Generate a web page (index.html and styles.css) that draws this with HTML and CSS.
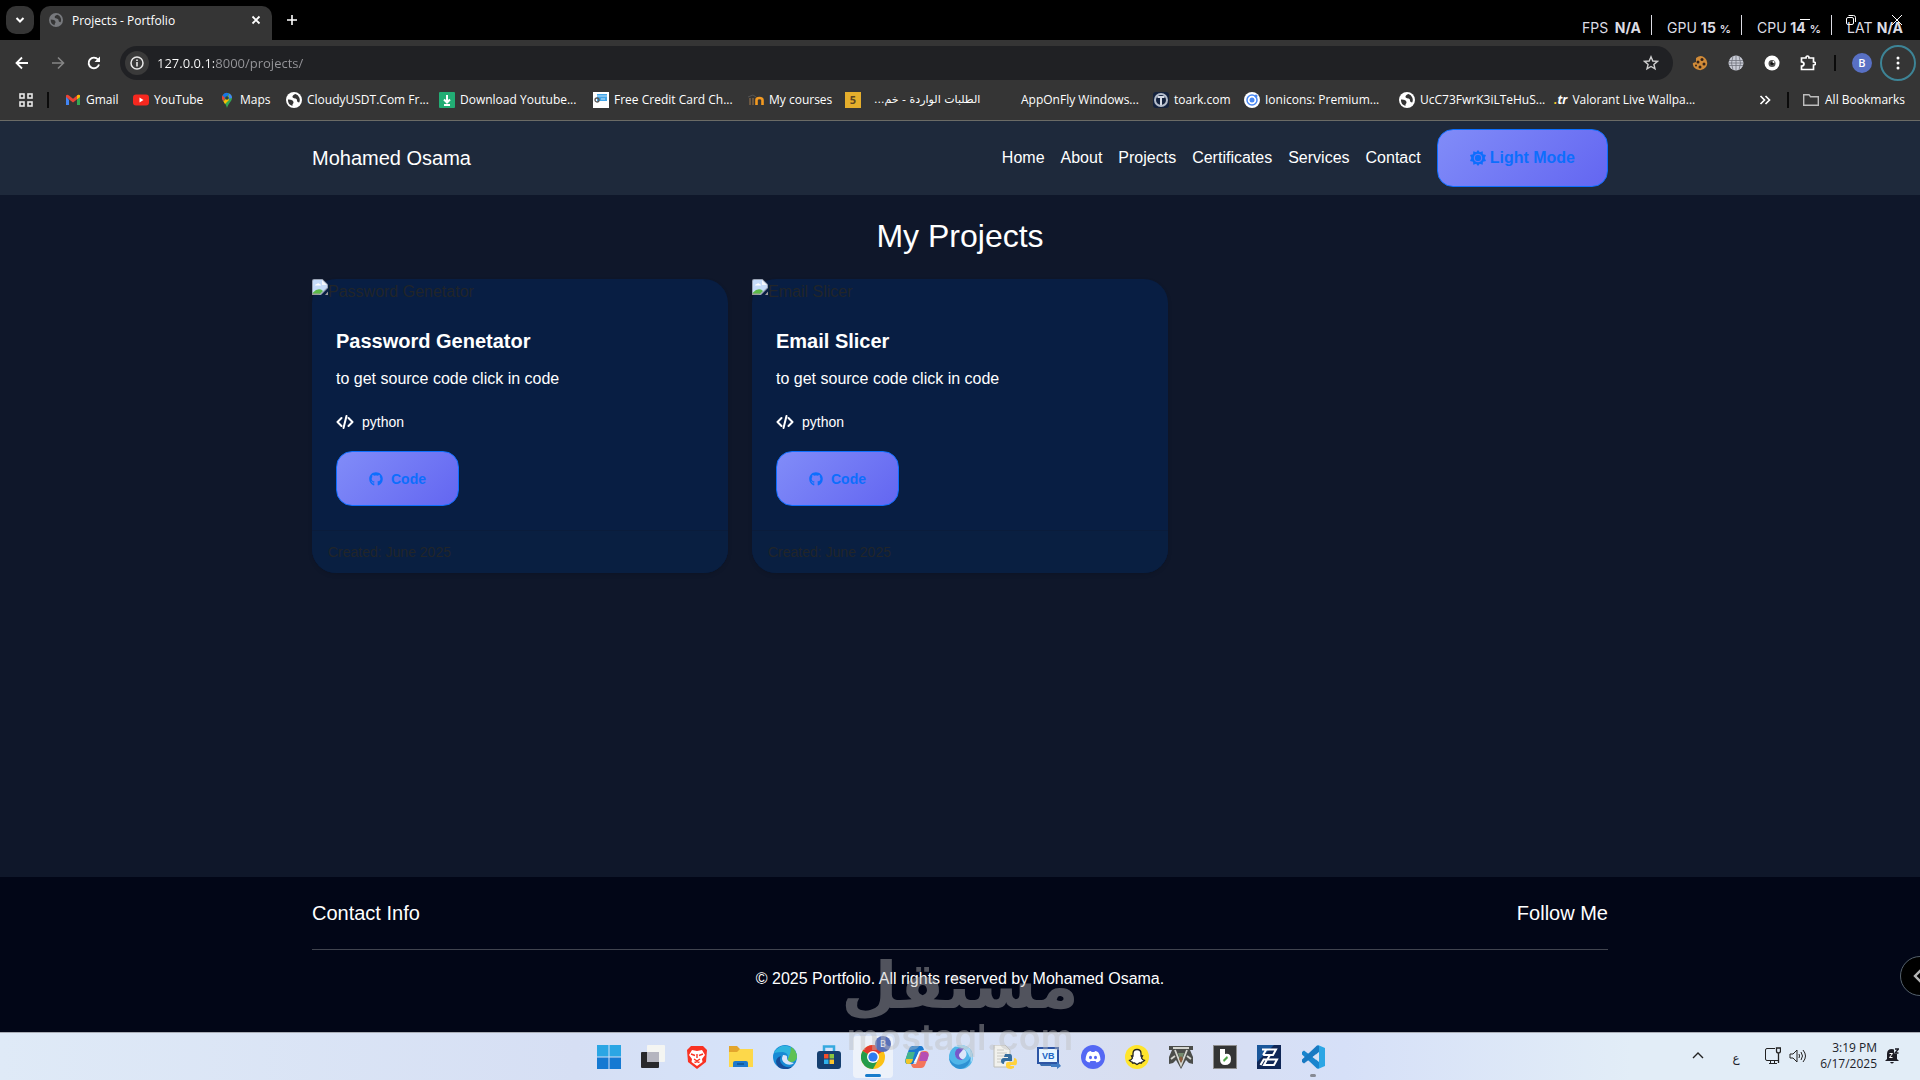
FILE: index.html
```html
<!DOCTYPE html>
<html lang="en">
<head>
<meta charset="utf-8">
<title>Projects - Portfolio</title>
<link rel="stylesheet" href="styles.css">
</head>
<body>
<svg class="defs" aria-hidden="true">
  <symbol id="globe" viewBox="0 0 16 16"><circle cx="8" cy="8" r="8" fill="currentColor"/><path d="M2 7.500c3 0 5.500.8 5.500 3 0 1.200-1.500 1.500-1 3.500A6.200 6.200 0 0 1 2 7.500ZM9.500 2C6.500 3 5.500 5 7.500 6c2 .8 3.500.3 3.500 2.500 0 1.200 1 2 2.200 2A6.200 6.200 0 0 0 9.500 2Z" fill="var(--hole)"/></symbol>
  <symbol id="broken" viewBox="0 0 16 16"><path d="M0 2Q0 0 2 0H10.500L16 5.500V9L9 16H2Q0 16 0 14Z" fill="#9aa4b5"/><path d="M1 2Q1 1 2 1H10L15 6V8.500L8 15H1Z" fill="#c5dcfa"/><path d="M10 1V6H15Z" fill="#f4f8fd"/><path d="M3 6.500Q3 5 5 5 6 3.500 7.500 5 9 5 9 6.500Z" fill="#fff"/><path d="M1 15V13.500Q5 9 9 10.500L11 12 8 15Z" fill="#5bb947"/><path d="M0 14.500H8L6.500 16H0ZM13 16l3-3.500V16Z" fill="#9b9b9b"/></symbol>
  <symbol id="code" viewBox="0 0 18 14"><path d="M5.500 3 1.500 7l4 4M12.500 3l4 4-4 4M10.500 1 7.500 13" fill="none" stroke="currentColor" stroke-width="2" stroke-linecap="round" stroke-linejoin="round"/></symbol>
  <symbol id="github" viewBox="0 0 496 512"><path fill="currentColor" d="M244.800 8C106.100 8 0 113.300 0 252c0 110.900 69.800 205.800 169.500 239.200 12.800 2.300 17.300-5.600 17.300-12.100 0-6.200-.3-40.400-.3-61.400 0 0-70 15-84.700-29.800 0 0-11.400-29.100-27.800-36.600 0 0-22.900-15.700 1.600-15.400 0 0 24.900 2 38.600 25.800 21.900 38.600 58.600 27.500 72.900 20.900 2.300-16 8.800-27.100 16-33.700-55.900-6.200-112.300-14.300-112.300-110.500 0-27.500 7.600-41.300 23.600-58.900-2.600-6.500-11.100-33.300 2.600-67.900 20.900-6.500 69 27 69 27 20-5.600 41.500-8.500 62.800-8.500s42.800 2.900 62.800 8.500c0 0 48.100-33.600 69-27 13.700 34.700 5.200 61.400 2.600 67.900 16 17.700 25.800 31.500 25.800 58.900 0 96.500-58.900 104.200-114.800 110.500 9.200 7.900 17 22.900 17 46.400 0 33.700-.3 75.400-.3 83.600 0 6.500 4.600 14.400 17.300 12.100C428.200 457.800 496 362.900 496 252 496 113.300 383.500 8 244.800 8z"/></symbol>
</svg>

<header class="chrome">
  <div class="tabstrip">
    <button class="tab-search" aria-label="Search tabs"><svg width="10" height="8" viewBox="0 0 10 8"><path d="M1.500 2 5 5.500 8.500 2" fill="none" stroke="#fff" stroke-width="2"/></svg></button>
    <div class="tab">
      <svg class="tab-icon" width="14" height="14"><use href="#globe"/></svg>
      <span class="tab-title">Projects - Portfolio</span>
      <button class="plain" aria-label="Close tab"><svg width="10" height="10" viewBox="0 0 10 10"><path d="M1.500 1.500l7 7M8.500 1.500l-7 7" stroke="#fff" stroke-width="1.800"/></svg></button>
    </div>
    <button class="plain new-tab" aria-label="New tab"><svg width="12" height="12" viewBox="0 0 12 12"><path d="M6 1v10M1 6h10" stroke="#fff" stroke-width="1.600"/></svg></button>
    <div class="hud">
      <div class="stat"><span>FPS</span><b>N/A</b></div>
      <div class="stat"><span>GPU</span><b>15<small>%</small></b></div>
      <div class="stat"><span>CPU</span><b>14<small>%</small></b></div>
      <div class="stat"><span>LAT</span><b>N/A</b></div>
    </div>
    <div class="window-buttons">
      <button class="plain" aria-label="Minimize"><svg width="10" height="10"><path d="M0 4.500h10" stroke="#fff"/></svg></button>
      <button class="plain" aria-label="Restore"><svg width="10" height="10" viewBox="0 0 10 10"><rect x=".5" y="2.500" width="7" height="7" rx="1.500" fill="none" stroke="#fff"/><path d="M2.500.5H7.500Q9.500.5 9.500 2.500V7" fill="none" stroke="#fff"/></svg></button>
      <button class="plain" aria-label="Close"><svg width="10" height="10"><path d="M0 0l10 10M10 0 0 10" stroke="#fff"/></svg></button>
    </div>
  </div>

  <div class="toolbar">
    <div class="nav-buttons">
      <button class="plain" aria-label="Back"><svg width="16" height="16" viewBox="0 0 16 16"><path d="M14 8H3M8 2.500 2.500 8 8 13.500" fill="none" stroke="#fff" stroke-width="1.800"/></svg></button>
      <button class="plain" aria-label="Forward"><svg width="16" height="16" viewBox="0 0 16 16"><path d="M2 8h11M8 2.500 13.500 8 8 13.500" fill="none" stroke="#858585" stroke-width="1.600"/></svg></button>
      <button class="plain" aria-label="Reload"><svg width="16" height="16" viewBox="0 0 16 16"><path d="M13 9.500A5.300 5.300 0 1 1 12 4.500L13.500 6" fill="none" stroke="#fff" stroke-width="1.900"/><path d="M14 1.500V7H8.500Z" fill="#fff"/></svg></button>
    </div>
    <div class="omnibox">
      <button class="site-info" aria-label="Site information"><svg width="14" height="14" viewBox="0 0 14 14"><circle cx="7" cy="7" r="6" fill="none" stroke="#e8e8e8" stroke-width="1.500"/><path d="M7 6v4.500M7 3.500V5" stroke="#e8e8e8" stroke-width="1.600"/></svg></button>
      <input class="url" type="text" aria-label="Address" value="127.0.0.1:8000/projects/">
      <button class="plain" aria-label="Bookmark this page"><svg width="16" height="16" viewBox="0 0 16 16"><path d="M8 1.800 9.800 6l4.600.4-3.500 3 1.100 4.500L8 11.500 4 13.900l1.100-4.500-3.500-3L6.200 6Z" fill="none" stroke="#cfcfcf" stroke-width="1.400"/></svg></button>
    </div>
    <div class="extensions">
      <svg width="16" height="16" viewBox="0 0 16 16"><path d="M4 3Q9-1 13 3 17 7 14 12 10 17 4 14 0 11 1 8L4 7Z" fill="#d18b38"/><g fill="#33231a"><circle cx="6" cy="7" r="1.500"/><circle cx="10" cy="4.500" r="1.500"/><circle cx="12" cy="9" r="1.500"/><circle cx="8" cy="12" r="1.500"/><circle cx="4" cy="10.500" r="1"/></g></svg>
      <svg width="16" height="16" viewBox="0 0 16 16"><circle cx="8" cy="8" r="7.500" fill="#c9ccd6"/><path d="M1 5.500h14M1 10.500h14M8 0v16M1 8h14M5 1Q2 8 5 15M11 1Q14 8 11 15" fill="none" stroke="#71747d" stroke-width=".8"/></svg>
      <svg width="16" height="16" viewBox="0 0 16 16"><circle cx="8" cy="8" r="7.500" fill="#fff"/><circle cx="8" cy="8.500" r="3.500" fill="#555"/><circle cx="8" cy="8.500" r="1.600" fill="#111"/><circle cx="9.500" cy="7" r="1" fill="#fff"/></svg>
      <svg width="16" height="16" viewBox="0 0 16 16"><path d="M1.500 3H6Q6 1 7.500 1T9 3h4.500v4q2 0 2 1.500t-2 1.500v4.500h-12V11q2.500 0 2.500-2T1.500 6.800Z" fill="none" stroke="#fff" stroke-width="1.700"/></svg>
    </div>
    <span class="divider toolbar-divider"></span>
    <button class="avatar" aria-label="Profile">B</button>
    <button class="menu" aria-label="Menu"><svg width="4" height="14" fill="#fff"><circle cx="2" cy="2" r="1.500"/><circle cx="2" cy="7" r="1.500"/><circle cx="2" cy="12" r="1.500"/></svg></button>
  </div>

  <nav class="bookmarks" aria-label="Bookmarks">
    <button class="plain apps" aria-label="Apps"><svg width="14" height="14" viewBox="0 0 14 14"><g fill="none" stroke="#e6e6e6" stroke-width="1.600"><rect x="1" y="1" width="4" height="4"/><rect x="9" y="1" width="4" height="4"/><rect x="1" y="9" width="4" height="4"/><rect x="9" y="9" width="4" height="4"/></g></svg></button>
    <span class="divider"></span>
    <div class="marks">
      <a href="#"><svg viewBox="0 0 16 16"><path d="M1 4v9h3V8Z" fill="#4285f4"/><path d="M15 4v9h-3V8Z" fill="#34a853"/><path d="M1 5V3.500Q2 2 4 3.500L8 6.800 12 3.500Q14 2 15 3.500V5L8 10.500Z" fill="#ea4335"/><path d="M12 3.500Q14 2 15 3.500V5L12 7.500Z" fill="#fbbc04"/></svg>Gmail</a>
      <a href="#"><svg viewBox="0 0 16 16"><rect y="2.500" width="16" height="11" rx="3" fill="#f6281f"/><path d="M6.500 5.500v5L10.500 8Z" fill="#fff"/></svg>YouTube</a>
      <a href="#"><svg viewBox="0 0 16 16"><path d="M3 6a5 5 0 0 1 10 0C13 9 9.500 11 8 16 7 11 3 9 3 6Z" fill="#34a853"/><path d="M3.500 3.500A5 5 0 0 1 10 1.400L6 6.500Z" fill="#1a73e8"/><path d="M10 1.400A5 5 0 0 1 13 6L9 7Z" fill="#4285f4"/><path d="M3.500 3.500 6 6 4.500 9.500Q2 6.500 3.500 3.500Z" fill="#ea4335"/><path d="M4.500 9.500 9.500 4 10 8 6 12Z" fill="#fbbc04"/><circle cx="8" cy="6" r="1.800" fill="#244"/></svg>Maps</a>
      <a href="#"><svg><use href="#globe"/></svg>CloudyUSDT.Com Fr...</a>
      <a href="#"><svg viewBox="0 0 16 16"><rect width="16" height="16" rx="1" fill="#22ad74"/><path d="M8 3v7M5 7.500 8 10.500l3-3M5 13h6" fill="none" stroke="#fff" stroke-width="2"/></svg>Download Youtube...</a>
      <a href="#"><svg viewBox="0 0 16 16"><rect width="16" height="16" fill="#fff"/><rect x="4" y="2" width="10" height="7" fill="#43a5e8"/><path d="M4 4h10M8 7h4" stroke="#bfe2fa"/><circle cx="4" cy="8" r="2" fill="none" stroke="#555" stroke-width="1.300"/></svg>Free Credit Card Ch...</a>
      <a href="#"><svg viewBox="0 0 16 16"><path d="M2 13V6M5 13V6" stroke="#6b5741" stroke-width="2"/><path d="M0 5 5 3l3 2" stroke="#555" fill="none"/><path d="M8.500 13V8q0-2 3-2t3 2v5" fill="none" stroke="#f39a21" stroke-width="2.600"/></svg>My courses</a>
      <a href="#"><span class="five">5</span><span class="arabic" dir="rtl" lang="ar">الطلبات الواردة - خم...</span></a>
      <a href="#" class="no-icon">AppOnFly Windows...</a>
      <a href="#"><svg viewBox="0 0 16 16"><rect width="16" height="16" rx="3" fill="#15233e"/><circle cx="8" cy="8" r="6" fill="none" stroke="#b5bdcb" stroke-width="2"/><path d="M4.500 5h7M8 5v8" stroke="#d5dae5" stroke-width="2"/></svg>toark.com</a>
      <a href="#"><svg viewBox="0 0 16 16"><circle cx="8" cy="8" r="8" fill="#fff"/><circle cx="8" cy="8" r="5" fill="none" stroke="#4887f2" stroke-width="1.500"/><circle cx="8" cy="8" r="2.500" fill="#4887f2"/><circle cx="12" cy="4" r="1.500" fill="#4887f2"/></svg>Ionicons: Premium...</a>
      <a href="#"><svg><use href="#globe"/></svg>UcC73FwrK3iLTeHuS...</a>
      <a href="#"><span class="tr"><i>.</i>tr</span>Valorant Live Wallpa...</a>
    </div>
    <button class="plain more" aria-label="More bookmarks"><svg width="12" height="10" viewBox="0 0 12 10"><path d="M1.500 1 5.500 5l-4 4M6.500 1l4 4-4 4" fill="none" stroke="#fff" stroke-width="1.700"/></svg></button>
    <span class="divider"></span>
    <a class="all" href="#"><svg viewBox="0 0 16 16"><path d="M.7 13.300V2.700H6L7.500 4.700h7.800v8.600Z" fill="none" stroke="#bdbdbd" stroke-width="1.400"/></svg>All Bookmarks</a>
  </nav>
</header>

<div class="page">
  <nav class="site-nav">
    <div class="container nav-row">
      <a class="brand" href="#">Mohamed Osama</a>
      <div class="links">
        <a href="#">Home</a><a href="#">About</a><a href="#">Projects</a><a href="#">Certificates</a><a href="#">Services</a><a href="#">Contact</a>
      </div>
      <button class="btn theme"><svg width="16" height="16" viewBox="0 0 16 16"><path d="M8 0l1.800 2.300L12.700 1.300l.2 3L16 5l-1.300 3L16 11l-3.100.7-.2 3-2.900-1L8 16l-1.800-2.300-2.900 1-.2-3L0 11l1.300-3L0 5l3.100-.7.2-3 2.900 1Z" fill="currentColor"/><circle cx="8" cy="8" r="3.800" fill="none" stroke="#777bf6" stroke-width="1"/></svg>Light Mode</button>
    </div>
  </nav>

  <main class="container">
    <h1>My Projects</h1>
    <div class="cards">
      <article class="card">
        <div class="card-image"><svg width="16" height="16"><use href="#broken"/></svg><span>Password Genetator</span></div>
        <div class="card-body">
          <h2>Password Genetator</h2>
          <p>to get source code click in code</p>
          <div class="lang"><svg width="18" height="14"><use href="#code"/></svg>python</div>
          <button class="btn source"><svg width="14" height="14"><use href="#github"/></svg>Code</button>
        </div>
        <div class="card-footer">Created: June 2025</div>
      </article>
      <article class="card">
        <div class="card-image"><svg width="16" height="16"><use href="#broken"/></svg><span>Email Slicer</span></div>
        <div class="card-body">
          <h2>Email Slicer</h2>
          <p>to get source code click in code</p>
          <div class="lang"><svg width="18" height="14"><use href="#code"/></svg>python</div>
          <button class="btn source"><svg width="14" height="14"><use href="#github"/></svg>Code</button>
        </div>
        <div class="card-footer">Created: June 2025</div>
      </article>
    </div>
  </main>

  <footer class="site-footer">
    <div class="container">
      <div class="footer-row"><h2>Contact Info</h2><h2>Follow Me</h2></div>
      <hr>
      <p>© 2025 Portfolio. All rights reserved by Mohamed Osama.</p>
    </div>
  </footer>
  <button class="side-tab" aria-label="Open panel"><svg width="10" height="16" viewBox="0 0 10 16"><path d="M8.500 1.500 2 8l6.500 6.500" fill="none" stroke="#b5b5b5" stroke-width="2.400"/></svg></button>
</div>

<footer class="taskbar">
  <div class="dock">
    <button aria-label="Start"><svg viewBox="0 0 24 24"><path d="M0 0h11.500v11.500H0ZM12.500 0H24v11.500H12.500Z" fill="#2ba6e4"/><path d="M0 12.500h11.500V24H0ZM12.500 12.500H24V24H12.500Z" fill="#1579d2"/></svg></button>
    <button aria-label="Task view"><svg viewBox="0 0 24 24"><rect x="6" y="0" width="18" height="17" rx="1" fill="#f4f5f2"/><rect x="0" y="7" width="18" height="16" rx="1" fill="#29292c"/><path d="M6 7h12v10H6Z" fill="#b5b5bf"/></svg></button>
    <button aria-label="Brave"><svg viewBox="0 0 24 24"><path d="M6 1h12l4 4-1 12-9 7-9-7L2 5Z" fill="#f93222"/><path d="M7 5l5 1 5-1 3 5-3 4 .5 3L12 21l-5.500-4 .5-3-3-4Z" fill="#fff"/><path d="M6 9l4 1.500M18 9l-4 1.500M12 9v4M9 14l3 2 3-2M9.500 17.500l2.500-1 2.500 1" fill="none" stroke="#f93222" stroke-width="1.400"/></svg></button>
    <button aria-label="File Explorer"><svg viewBox="0 0 24 24"><path d="M0 1h8l3 3h13v18H0Z" fill="#e3a52d"/><path d="M0 7h8l3-3h13v18H0Z" fill="#fdd84a"/><path d="M4 22v-4q0-2 2-2h11q2 0 2 2v4Z" fill="#1d79cd"/><path d="M8 19h7" stroke="#10538f" stroke-width="1.500"/></svg></button>
    <button aria-label="Edge"><svg viewBox="0 0 24 24"><circle cx="12" cy="12" r="12" fill="#188ad5"/><path d="M1 8A12 12 0 0 1 24 12q-1 5-6 5-4 0-3-3 1-6-5-7-5 0-9 1Z" fill="#2fb4df"/><path d="M18 2a12 12 0 0 1 6 10q-1 5-6 5-4 0-3-3 3-6 3-12Z" fill="#60c152"/><path d="M8 11q-3 6 3 10 6 3 10-1-4 5-10 4-8-1-8-8 1-4 5-5Z" fill="#174d99"/><path d="M10 10q-3 6 3 9 5 2 8-1-7-1-7-5 1-3-4-3Z" fill="#d9e5fa"/></svg></button>
    <button aria-label="Store"><svg viewBox="0 0 24 24"><path d="M7 7V1.500h10V7" fill="none" stroke="#36a9df" stroke-width="2.500"/><rect y="6" width="24" height="18" rx="3" fill="#153f70"/><path d="M7 9h4.500v4.500H7Z" fill="#f34e2b"/><path d="M12.500 9H17v4.500h-4.500Z" fill="#8bc53f"/><path d="M7 14.500h4.500V19H7Z" fill="#30b2ea"/><path d="M12.500 14.500H17V19h-4.500Z" fill="#fbc52d"/></svg></button>
    <button class="active" aria-label="Chrome"><svg viewBox="0 0 24 24"><circle cx="12" cy="12" r="12" fill="#fbc116"/><path d="M12 12 1.600 6A12 12 0 0 1 22.400 6Z" fill="#e33b2e"/><path d="M1.600 6A12 12 0 0 0 12 24l5-9-5-3Z" fill="#249c4b"/><circle cx="12" cy="12" r="6" fill="#fff"/><circle cx="12" cy="12" r="4.600" fill="#2f7bee"/></svg><span class="badge">B</span></button>
    <button aria-label="Copilot"><svg viewBox="0 0 24 24"><path d="M8 1h8q2 0 3 4l-5 1-3 8-3 5H3q-4 0-2-6L4 4q1-3 4-3Z" fill="#1b79cf"/><path d="M3 7h7l-3 10q-1 2-4 2-4 0-2-6Z" fill="#44b48b"/><path d="M1 14h7q-1 5-5 5-3 0-2-5Z" fill="#f2c426"/><path d="M16 23H9q-2 0-3-4h5l4-11q1-2 4-2h2q4 1 2 6l-3 8q-1 3-4 3Z" fill="#f4755b"/><path d="M16 7h5q4 1 2 6l-1 3h-8Z" fill="#b64fb3"/><path d="M14 7l-5 10h2l4-10Z" fill="#fff"/></svg></button>
    <button aria-label="Browser"><svg viewBox="0 0 24 24"><circle cx="12" cy="12" r="12" fill="#50b5e8"/><path d="M5 2q9-5 16 2 5 7 1 14-1-12-11-16Z" fill="#a6daf6"/><path d="M0 13q5 9 13 6 7-2 9-8-1 12-11 13Q1 22 0 13Z" fill="#2e91d3"/><circle cx="12" cy="9" r="5.500" fill="#dce6fa"/><path d="M15 3.500q-9-2-9 6 1 6 8 5.500-7-4-2-8Z" fill="#7758c9"/></svg></button>
    <button aria-label="Python file"><svg viewBox="0 0 24 24"><path d="M1 0h11l5 5v17H1Z" fill="#f1f1ed" stroke="#bebeb9"/><path d="M4 5h7M4 8h10M4 11h8M4 14h4M4 17h4" stroke="#c9c9c4"/><path d="M12 9h5q2 0 2 3v4h-6q-2 0-2 3-3 0-3-3t3-3h4v-1h-4Z" fill="#356d9f"/><path d="M21 13q3 0 3 4t-3 3h-4v1h4v2l-3 1q-5 0-5-3v-2q0-2 2-2h4q2 0 2-2Z" fill="#ffd23c"/></svg></button>
    <button aria-label="VB"><svg viewBox="0 0 24 24"><path d="M2 4h20v17H4L2 18Z" fill="#3a6fb1"/><rect x="1" y="3" width="20" height="15" fill="#e6f5ff" stroke="#2c55a5" stroke-width="2"/><path d="M14 19h6v-3l4 5-4 3v-2h-6Z" fill="#407cc2"/><text x="5" y="14" font-family="Liberation Sans" font-weight="700" font-size="9" fill="#2166c4">VB</text></svg></button>
    <button aria-label="Discord"><svg viewBox="0 0 24 24"><circle cx="12" cy="12" r="12" fill="#5468f4"/><path d="M8 6.500l2-.5.500 1h3l.5-1 2 .5q3 1.500 3.500 8.500-1.500 2-4 2.500l-1-1.500h-5l-1 1.500Q6 17 4.500 15 5 8 8 6.500Z" fill="#fff"/><ellipse cx="9.500" cy="12.500" rx="1.500" ry="1.700" fill="#5468f4"/><ellipse cx="14.500" cy="12.500" rx="1.500" ry="1.700" fill="#5468f4"/></svg></button>
    <button aria-label="Snapchat"><svg viewBox="0 0 24 24"><circle cx="12" cy="12" r="12" fill="#ffe52c"/><path d="M12 4.500q4 0 4 4v2.500l1.500 0-1 2q1 2 3 2.500-1 1.500-2.500 1.500l-.5 1h-2L12 19.500 9.500 18h-2L7 17q-1.500 0-2.500-1.500 2-.5 3-2.500l-1-2H8V8.500q0-4 4-4Z" fill="#fff" stroke="#222" stroke-width="1.300"/></svg></button>
    <button aria-label="Game"><svg viewBox="0 0 24 24"><path d="M0 1h24v4h-3l3 7v7l-4-1-3-3-5 9-5-9-3 3-4 1v-7l3-7H0Z" fill="#4b4d4a"/><path d="M4 3h16M6 5l6 15 6-15M2 14l4-3M22 14l-4-3" fill="none" stroke="#d4d5cf" stroke-width="1.800"/><path d="M9 8h6l-3 9Z" fill="#758b6d"/><path d="m10 14 2-3 2 3-2 4Z" fill="#8c5b3c"/></svg></button>
    <button aria-label="Bandicam"><svg viewBox="0 0 24 24"><rect x=".5" y=".5" width="23" height="23" fill="#343535" stroke="#8d8d8d"/><path d="M7 4h5v5q6-1 6 5t-6 6q-5 0-5-6Z" fill="#fff"/><path d="m10 15 4-4 1 2-4 4Z" fill="#4ea445"/></svg></button>
    <button aria-label="Editor"><svg viewBox="0 0 24 24"><rect width="24" height="24" fill="#102756"/><path d="M0 0h17L0 17Z" fill="#1a579b"/><path d="M5 4.500h14l-3 5.500H6M9 5l-3 5M13 10l-2.500 4M6 14.500h14L17 20H7l3-5.500M3.500 20 7 14" fill="none" stroke="#fff" stroke-width="2"/></svg></button>
    <button class="running" aria-label="VS Code"><svg viewBox="0 0 24 24"><path d="M17 0l7 3v18l-7 3-2-2V2Z" fill="#2ca6e5"/><path d="M1 7l2-1.500L18 17v6l-2 .5L1 9.500Z" fill="#1985ce"/><path d="M1 17l2 1.500L18 7V1L16 .5 1 14.500Z" fill="#1879c2"/><path d="M18 7v10l-6-5Z" fill="#d7e1f5"/></svg></button>
  </div>
  <div class="tray">
    <svg width="12" height="12" viewBox="0 0 12 12"><path d="m1 8 5-5 5 5" fill="none" stroke="#222" stroke-width="1.400"/></svg>
    <span class="input-lang" lang="ar">ع</span>
    <div class="status">
      <svg width="16" height="18" viewBox="0 0 16 18"><path d="M10 1.500H2Q.5 1.500.5 3v9Q.5 13.500 2 13.500H13M4 16.500h8M5.500 14v2M9.500 14v2" fill="none" stroke="#222"/><path d="M11.500 1h4v3q0 2-2 2t-2-2ZM13.500 6v10" fill="none" stroke="#222" stroke-width="1.300"/></svg>
      <svg width="18" height="16" viewBox="0 0 18 16"><path d="M1 6v4h3l4 4V2L4 6ZM10 6q1 2 0 4M12 4q3 4 0 8M14 2q5 6 0 12" fill="none" stroke="#222"/></svg>
    </div>
    <div class="clock"><span>3:19 PM</span><span>6/17/2025</span></div>
    <svg width="14" height="16" viewBox="0 0 14 16"><path d="M2 11V6Q2 1 7 1l2 .5V6h3v5l2 2H0ZM5 14h4q-2 3-4 0Z" fill="#1d1d25"/><path d="M4.500 5.500h3l-3 4h3" fill="none" stroke="#fff"/><path d="M10 1h3.500L10 5h3.500" fill="none" stroke="#1d1d25" stroke-width="1.300"/></svg>
  </div>
</footer>

<div class="watermark"><span class="wm-ar" lang="ar" dir="rtl">مستقل</span><span class="wm-en">mostaql.com</span></div>
</body>
</html>
```
FILE: styles.css
```css
* { box-sizing: border-box; }
body {
  margin: 0;
  min-height: 100vh;
  display: flex;
  flex-direction: column;
  position: relative;
  overflow-x: hidden;
  font-family: "Liberation Sans", Arial, sans-serif;
  font-size: 16px;
  color: #fff;
  background: #0f172a;
}
button { font: inherit; color: inherit; padding: 0; border: 0; background: none; }
a { color: inherit; text-decoration: none; }
h1, h2, p { margin: 0; font-weight: 400; }
svg { display: block; flex: none; }
.defs { position: absolute; width: 0; height: 0; }
.plain { display: grid; place-items: center; }

/* browser window */
.chrome {
  background: #353535;
  border-bottom: 1px solid #6b6b66;
  font-family: "Open Sans", "Noto Sans", sans-serif;
  font-size: 12px;
  --hole: #353535;
}
.tabstrip {
  position: relative;
  display: flex;
  height: 40px;
  padding: 6px 0 0 6px;
  background: #000;
}
.tab-search {
  display: grid;
  place-items: center;
  width: 28px;
  height: 28px;
  margin-right: 6px;
  border-radius: 10px;
  background: #353535;
}
.tab {
  display: flex;
  align-items: center;
  width: 232px;
  height: 34px;
  padding: 0 11px 6px 9px;
  border-radius: 10px 10px 0 0;
  background: #353535;
}
.tab-icon { color: #77797d; margin-right: 9px; }
.tab-title { flex: 1; }
.new-tab { width: 40px; height: 28px; }
.hud {
  display: flex;
  align-items: center;
  margin-left: auto;
  height: 34px;
  padding: 4px 17px 0 0;
  font-family: Inter, sans-serif;
  font-size: 14px;
  line-height: 20px;
  color: #dcdce4;
}
.stat { display: flex; align-items: center; justify-content: space-between; width: 90px; height: 20px; padding: 6px 10px 0 15px; border-left: 1px solid #dcdce4; }
.stat:first-child { border-left: 0; width: 84px; }
.stat:last-child { width: 72px; padding-right: 0; }
.stat b { font-weight: 700; }
.stat small { font-size: 11px; margin-left: 4px; }
.window-buttons { position: absolute; right: 18px; top: 15px; display: flex; gap: 36px; }
.window-buttons button:first-child { margin-right: 0; }

.toolbar { display: flex; align-items: center; height: 46px; padding: 0 4px 0 14px; }
.nav-buttons { display: flex; gap: 20px; width: 106px; }
.omnibox {
  flex: 1;
  display: flex;
  align-items: center;
  height: 34px;
  padding: 0 14px 0 5px;
  border-radius: 17px;
  background: #202124;
}
.site-info { display: grid; place-items: center; width: 24px; height: 24px; margin-right: 8px; border-radius: 50%; background: #3a3a3a; }
.url {
  flex: 1;
  padding: 0;
  border: 0;
  outline: 0;
  font-family: "Open Sans", "Noto Sans", sans-serif;
  font-size: 13px;
  color: transparent;
  background: linear-gradient(to right, #fff 57px, #97979b 57px);
  background-clip: text;
  -webkit-background-clip: text;
}
.extensions { display: flex; gap: 20px; margin-left: 19px; }
.divider { width: 2px; height: 16px; background: #0b0b0b; }
.toolbar-divider { margin: 0 16px 0 18px; }
.avatar { width: 20px; height: 20px; border-radius: 50%; background: #5870c4; font-size: 11px; font-weight: 600; line-height: 20px; }
.menu { display: grid; place-items: center; width: 36px; height: 36px; margin-left: 8px; border: 2px solid #3d8496; border-radius: 50%; }

.bookmarks { display: flex; align-items: center; height: 34px; padding: 0 15px 6px 19px; }
.apps { margin-right: 14px; }
.marks {
  flex: 1;
  display: grid;
  grid-template-columns: 68px 86px 67px 153px 154px 155px 97px 160px 148px 91px 155px 155px 136px;
  margin-left: 16px;
  white-space: nowrap;
}
.marks a, .all { display: flex; align-items: center; gap: 5px; line-height: 16px; }
.marks svg, .all svg { width: 16px; height: 16px; }
.no-icon { padding-left: 16px; }
.five { width: 16px; height: 16px; margin-right: 8px; background: #e5ae2c; color: #5d4522; font-size: 11px; font-weight: 700; line-height: 16px; text-align: center; }
.arabic { font-family: "DejaVu Sans", sans-serif; font-size: 11px; }
.tr { width: 16px; font-size: 12px; font-weight: 700; font-style: italic; line-height: 16px; }
.tr i { color: #f7c928; }
.more { margin-right: 16px; }
.all { margin-left: 14px; gap: 6px; }

/* portfolio page */
.page { flex: 1; display: flex; flex-direction: column; position: relative; overflow: hidden; }
.container { width: 100%; max-width: 1320px; margin: 0 auto; padding: 0 12px; }
.site-nav { background: #1e293b; padding: 8px 0; }
.nav-row { display: flex; align-items: center; }
.brand { font-size: 20px; margin-right: auto; }
.links { display: flex; gap: 16px; margin-right: 16px; }
.btn {
  display: flex;
  align-items: center;
  justify-content: center;
  border: 1px solid #0d6efd;
  border-radius: 16px;
  background: linear-gradient(135deg, #818cf8, #6366f1);
  color: #0d6efd;
  font-weight: 700;
}
.theme { height: 58px; padding: 0 32px; gap: 4px; }
main.container { flex: 1; padding-top: 22px; }
h1 { font-size: 32px; line-height: 38px; text-align: center; }
.cards { display: grid; grid-template-columns: repeat(3, 1fr); gap: 24px; margin-top: 24px; padding-bottom: 24px; }
.card { border-radius: 24px; background: #081e43; box-shadow: 0 2px 4px rgba(0, 0, 0, .12); }
.card-image { display: flex; line-height: 26px; color: #212529; }
.card-body { padding: 22px 24px 24px; }
.card h2 { font-size: 20px; font-weight: 700; line-height: 28px; }
.card p { margin-top: 12px; line-height: 24px; }
.lang { display: flex; align-items: center; gap: 8px; margin: 20px 0 18px; font-size: 14px; line-height: 22px; }
.source { height: 55px; width: 123px; gap: 8px; font-size: 14px; }
.card-footer { padding: 12px 16px; border-top: 1px solid #0a1c3b; background: #091f41; border-radius: 0 0 24px 24px; font-size: 14px; line-height: 18px; color: #212529; }

.site-footer { height: 155px; padding-top: 24px; background: #020617; }
.footer-row { display: flex; justify-content: space-between; }
.site-footer h2 { font-size: 20px; line-height: 24px; }
.site-footer hr { margin: 24px 0 17px; border: 0; border-top: 1px solid #41444f; }
.site-footer p { line-height: 24px; text-align: center; }
.side-tab { position: absolute; right: -20px; top: 835px; width: 40px; height: 40px; padding-left: 12px; border: 1px solid #55616c; border-radius: 50%; background: #000; }

/* taskbar */
.taskbar {
  position: relative;
  display: flex;
  align-items: center;
  justify-content: center;
  height: 48px;
  padding-left: 2px;
  border-top: 1px solid #a9adb6;
  background: linear-gradient(to right, #dfeaf7, #d6dff4 30%, #d6e4fb 42%, #d8def0 60%, #d6e0f8 70%, #e2edf7 85%, #e2edf7);
  color: #20222a;
  font-family: "Open Sans", "Noto Sans", sans-serif;
}
.dock { display: flex; gap: 4px; }
.dock button { position: relative; display: grid; place-items: center; width: 40px; height: 42px; border-radius: 4px; }
.dock svg { width: 24px; height: 24px; }
.dock .active { background: #edf2fa; }
.badge { position: absolute; right: 2px; top: 0; width: 16px; height: 16px; border-radius: 50%; background: #5870b8; color: #fff; font-size: 9px; line-height: 16px; }
.active::after, .running::after { content: ""; position: absolute; bottom: 1px; left: 12px; width: 16px; height: 3px; border-radius: 2px; background: #177bcb; }
.running::after { left: 17px; width: 6px; background: #868a94; }
.tray { position: absolute; right: 21px; top: 0; height: 46px; display: flex; align-items: center; }
.input-lang { width: 12px; margin: 4px 23px 0 26px; font-family: "DejaVu Sans", sans-serif; font-size: 12px; text-align: center; }
.status { display: flex; align-items: center; gap: 8px; }
.clock { display: flex; flex-direction: column; align-items: flex-end; width: 70px; margin-right: 8px; font-size: 12px; line-height: 16px; }

.watermark {
  position: absolute;
  left: 0;
  right: 0;
  bottom: 23px;
  display: flex;
  flex-direction: column;
  align-items: center;
  color: #bebebe;
  opacity: .42;
  pointer-events: none;
}
.wm-ar { font-family: "DejaVu Sans", sans-serif; font-weight: 700; font-size: 65px; line-height: 62px; }
.wm-en { font-family: Inter, sans-serif; font-weight: 600; font-size: 36px; line-height: 40px; }
```
